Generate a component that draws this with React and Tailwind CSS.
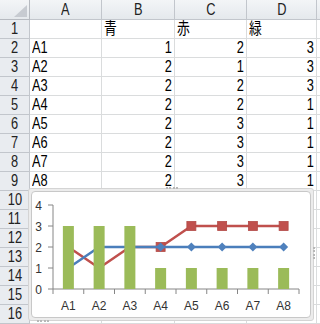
import React from "react";

const cols = ["A", "B", "C", "D"];
const widths = ["w-[72px]", "w-[73px]", "w-[72px]", "w-[70px]"];

const data = [
  ["", "青", "赤", "緑"],
  ["A1", 1, 2, 3],
  ["A2", 2, 1, 3],
  ["A3", 2, 2, 3],
  ["A4", 2, 2, 1],
  ["A5", 2, 3, 1],
  ["A6", 2, 3, 1],
  ["A7", 2, 3, 1],
  ["A8", 2, 3, 1],
];

const font = { fontFamily: '"Liberation Sans", "Noto Sans CJK JP", sans-serif' };
const chartFont = { fontFamily: '"Liberation Sans", sans-serif' };

// plot area in page coordinates
const X0 = 53;
const X1 = 299;
const Y0 = 289;
const UNIT = 21;
const CW = (X1 - X0) / 8;
const cx = (i) => X0 + CW * (i + 0.5);
const cy = (v) => Y0 - v * UNIT;

const Chart = () => {
  const items = data.slice(1);
  const blue = items.map((r, i) => `${cx(i)},${cy(r[1])}`).join(" ");
  const red = items.map((r, i) => `${cx(i)},${cy(r[2])}`).join(" ");
  return (
    <div className="absolute left-[28px] top-[188px] w-[286px] h-[133px] border border-[#d4d4d4] bg-[#ececec] rounded-[3px] p-[2px]">
      <div className="relative w-full h-full bg-white rounded-[4px] border border-[#c8c8c8]">
        <svg className="absolute inset-0" width="278" height="125" viewBox="32 192 278 125">
          {/* y axis */}
          <line x1={X0} y1={cy(4)} x2={X0} y2={Y0} stroke="#868686" strokeWidth="1" />
          {[0, 1, 2, 3, 4].map((v) => (
            <g key={v}>
              <line x1={X0 - 5} y1={cy(v)} x2={X0} y2={cy(v)} stroke="#868686" />
              <text x={42} y={cy(v) + 4.5} fontSize="12" textAnchor="end" fill="#333" style={chartFont}>
                {v}
              </text>
            </g>
          ))}
          {/* x axis */}
          <line x1={X0} y1={Y0} x2={X1} y2={Y0} stroke="#868686" />
          {Array.from({ length: 9 }).map((_, i) => (
            <line key={i} x1={X0 + CW * i} y1={Y0} x2={X0 + CW * i} y2={Y0 + 5} stroke="#868686" />
          ))}
          {items.map((r, i) => (
            <text key={r[0]} x={cx(i)} y={310} fontSize="12" textAnchor="middle" fill="#333" style={chartFont}>
              {r[0]}
            </text>
          ))}
          {/* lines */}
          <polyline points={red} fill="none" stroke="#c0504d" strokeWidth="2.5" strokeLinejoin="round" />
          {items.map((r, i) => (
            <rect key={i} x={cx(i) - 4.5} y={cy(r[2]) - 4.5} width="9" height="9" fill="#c0504d" stroke="#b24a47" strokeWidth="0.8" />
          ))}
          <polyline points={blue} fill="none" stroke="#4a7ebb" strokeWidth="2.5" strokeLinejoin="round" />
          {items.map((r, i) => (
            <polygon
              key={i}
              points={`${cx(i)},${cy(r[1]) - 4.5} ${cx(i) + 4.5},${cy(r[1])} ${cx(i)},${cy(r[1]) + 4.5} ${cx(i) - 4.5},${cy(r[1])}`}
              fill="#4f81bd"
            />
          ))}
          {/* bars on top */}
          {items.map((r, i) => (
            <rect key={i} x={cx(i) - 5.5} y={cy(r[3])} width="11" height={r[3] * UNIT} fill="#9bbb59" />
          ))}
        </svg>
      </div>
      <div className="absolute left-[137px] -top-[2px] w-[12px] border-t-2 border-dotted border-[#b8b8b8]" />
      <div className="absolute left-[8px] -bottom-[2px] w-[12px] border-t-2 border-dotted border-[#b8b8b8]" />
      <div className="absolute -right-[2px] top-[58px] h-[12px] border-l-2 border-dotted border-[#b8b8b8]" />
    </div>
  );
};

const App = () => {
  return (
    <div className="relative w-[320px] h-[324px] overflow-hidden bg-white text-[16px] leading-none text-black" style={font}>
      {/* column header */}
      <div className="flex h-[20px] bg-gradient-to-b from-[#f3f5f7] to-[#e4e8ec] text-[#222]">
        <div className="relative w-[30px] border-r border-b border-[#b6bac0]">
          <svg className="absolute left-[14px] top-[5px]" width="13" height="12">
            <polygon points="13,0 13,12 0,12" fill="#c7cbd1" />
          </svg>
        </div>
        {cols.map((c, i) => (
          <div key={c} className={`${widths[i]} flex items-center justify-center border-r border-b border-[#c2c6cc]`}>
            <span className="inline-block scale-x-[0.8]">{c}</span>
          </div>
        ))}
        <div className="flex-1 border-b border-[#c2c6cc]" />
      </div>
      {Array.from({ length: 16 }).map((_, ri) => {
        const row = data[ri];
        return (
          <div key={ri} className="flex h-[19px]">
            <div className="w-[30px] flex items-center justify-center bg-[#e9ecf0] border-r border-b border-[#c2c6cc] text-[#222]">
              <span className="inline-block scale-x-[0.8]">{ri + 1}</span>
            </div>
            {cols.map((c, ci) => {
              const v = row ? row[ci] : "";
              const num = typeof v === "number";
              return (
                <div
                  key={c}
                  className={`${widths[ci]} flex items-center border-r border-b border-[#dadcdd] ${
                    num ? "justify-end pr-[2px]" : "justify-start pl-[2px]"
                  }`}
                >
                  <span className={`inline-block scale-x-[0.8] ${num ? "origin-right" : "origin-left"}`}>{v}</span>
                </div>
              );
            })}
            <div className="flex-1 border-b border-[#dadcdd]" />
          </div>
        );
      })}
      <Chart />
    </div>
  );
};

export default App;
